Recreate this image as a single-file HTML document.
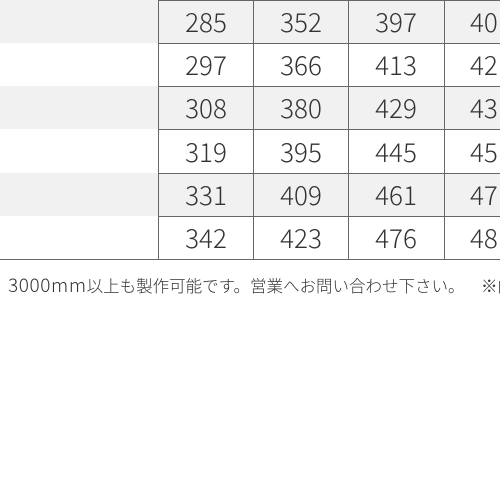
<!DOCTYPE html>
<html><head><meta charset="utf-8"><style>
html,body{margin:0;padding:0;width:500px;height:500px;overflow:hidden;background:#fff;}
body{position:relative;font-family:"Liberation Sans","Noto Sans CJK JP",sans-serif;color:#333;}
.row{position:absolute;left:0;width:500px;height:43px;}
.g{background:#f0f1f0;}
.h{position:absolute;height:1px;background:#666;}
.v{position:absolute;width:1px;top:0;height:260px;background:#666;}
.n{position:absolute;width:94px;text-align:center;font-size:26px;line-height:43px;font-family:"Noto Sans CJK JP","Liberation Sans",sans-serif;font-weight:300;}
.note{position:absolute;top:273px;left:8px;font-size:16.5px;line-height:24px;white-space:nowrap;font-family:"Noto Sans CJK JP",sans-serif;font-weight:300;}
.note .l{font-size:19px;letter-spacing:0.6px;}
</style></head><body>
<div class="row g" style="top:0"></div>
<div class="row g" style="top:86px"></div>
<div class="row g" style="top:173px"></div>
<div class="h" style="left:158px;width:342px;top:0"></div>
<div class="h" style="left:158px;width:342px;top:43px"></div>
<div class="h" style="left:158px;width:342px;top:86px"></div>
<div class="h" style="left:158px;width:342px;top:129px"></div>
<div class="h" style="left:158px;width:342px;top:173px"></div>
<div class="h" style="left:158px;width:342px;top:216px"></div>
<div class="h" style="left:0;width:500px;top:259px"></div>
<div class="v" style="left:158px"></div>
<div class="v" style="left:253px"></div>
<div class="v" style="left:348px"></div>
<div class="v" style="left:444px"></div>

<div class="n" style="left:159px;top:0">285</div><div class="n" style="left:254px;top:0">352</div><div class="n" style="left:349px;top:0">397</div><div class="n" style="left:445px;top:0;text-align:left;padding-left:25px">40</div>
<div class="n" style="left:159px;top:43px">297</div><div class="n" style="left:254px;top:43px">366</div><div class="n" style="left:349px;top:43px">413</div><div class="n" style="left:445px;top:43px;text-align:left;padding-left:25px">42</div>
<div class="n" style="left:159px;top:86px">308</div><div class="n" style="left:254px;top:86px">380</div><div class="n" style="left:349px;top:86px">429</div><div class="n" style="left:445px;top:86px;text-align:left;padding-left:25px">43</div>
<div class="n" style="left:159px;top:130px">319</div><div class="n" style="left:254px;top:130px">395</div><div class="n" style="left:349px;top:130px">445</div><div class="n" style="left:445px;top:130px;text-align:left;padding-left:25px">45</div>
<div class="n" style="left:159px;top:173px">331</div><div class="n" style="left:254px;top:173px">409</div><div class="n" style="left:349px;top:173px">461</div><div class="n" style="left:445px;top:173px;text-align:left;padding-left:25px">47</div>
<div class="n" style="left:159px;top:216px">342</div><div class="n" style="left:254px;top:216px">423</div><div class="n" style="left:349px;top:216px">476</div><div class="n" style="left:445px;top:216px;text-align:left;padding-left:25px">48</div>

<div class="note" style="left:-12px">、</div>
<div class="note"><span class="l">3000mm</span>以上も製作可能です。営業へお問い合わせ下さい。</div>
<div class="note" style="left:481px">※内</div>
</body></html>
